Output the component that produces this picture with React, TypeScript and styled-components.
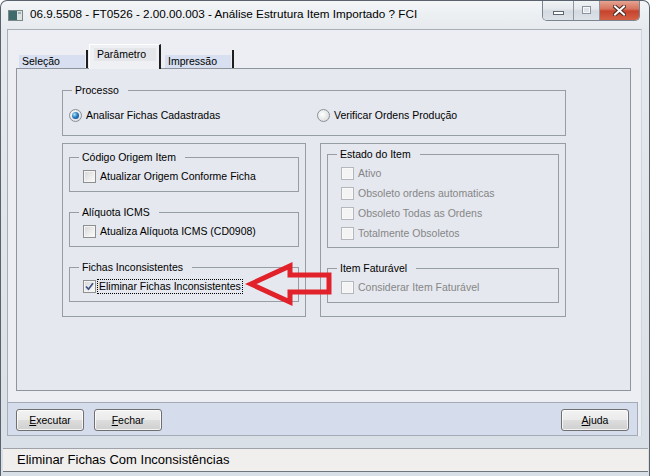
import React from 'react';
import styled, { createGlobalStyle, css } from 'styled-components';

const GlobalStyle = createGlobalStyle`
  html, body { margin: 0; padding: 0; background: #ffffff; }
  body { font-family: 'Liberation Sans', Arial, sans-serif; color: #000; }
`;

const Window = styled.div`
  width: 650px;
  height: 476px;
  box-sizing: border-box;
  display: flex;
  flex-direction: column;
  background: linear-gradient(180deg, #f3f5f7 0, #e6eaee 28px, #d9dfe6 100%);
  border: 1px solid #59626d;
  border-bottom: none;
  border-radius: 7px 7px 0 0;
  overflow: hidden;
`;

const TitleBar = styled.div`
  height: 28px;
  flex: none;
  display: flex;
  align-items: flex-start;
`;

const TitleIcon = styled.svg`
  margin: 9px 0 0 7px;
  flex: none;
`;

const TitleText = styled.div`
  margin: 5px 0 0 7px;
  font-size: 11.7px;
  line-height: 16px;
  white-space: nowrap;
`;

const Controls = styled.div`
  margin-left: auto;
  margin-right: 9px;
  margin-top: -1px;
  display: flex;
  height: 20px;
  border: 1px solid #7b848f;
  border-top: none;
  border-radius: 0 0 5px 5px;
  overflow: hidden;
`;

const ControlButton = styled.div<{ $kind: 'min' | 'max' | 'close' }>`
  height: 100%;
  display: flex;
  align-items: center;
  justify-content: center;
  box-sizing: border-box;
  ${(p) =>
    p.$kind === 'close'
      ? css`
          width: 39px;
          background: linear-gradient(180deg, #e8a998 0%, #d7735d 45%, #c7432c 55%, #d36146 100%);
        `
      : css`
          width: ${p.$kind === 'min' ? 31 : 26}px;
          border-right: 1px solid #8d96a0;
          background: linear-gradient(180deg, #f3f5f7 0%, #e4e8ec 45%, #d4dae1 55%, #dde2e8 100%);
        `}
`;

const MinGlyph = styled.span`
  width: 9px;
  height: 2px;
  margin-top: 6px;
  background: #fff;
  border: 1px solid #5d6672;
`;

const MaxGlyph = styled.span`
  width: 7px;
  height: 6px;
  border: 1px solid #8a939d;
  box-shadow: inset 0 0 0 1px #f6f7f8;
  background: #dfe3e8;
`;

const Client = styled.div`
  flex: none;
  margin: 0 7px 12px 6px;
  background: #eceef3;
  border-top: 1px solid #a8aeb6;
  border-left: 1px solid #a8aeb6;
  border-right: 1px solid #cfd5dc;
  display: flex;
  flex-direction: column;
`;

const TabArea = styled.div`
  padding: 14px 0 0 8px;
`;

const TabStrip = styled.div`
  height: 24px;
  display: flex;
  align-items: flex-end;
  gap: 1px;
`;

const Tab = styled.div<{ $active?: boolean }>`
  box-sizing: border-box;
  font-size: 10.5px;
  line-height: 13px;
  width: 72px;
  border-right: 2px solid #1e1e1e;
  ${(p) =>
    p.$active
      ? css`
          height: 25px;
          margin-bottom: -1px;
          position: relative;
          z-index: 1;
          padding: 3px 3px 0 4px;
          background: #eef0f4;
          border-top: 1px solid #ffffff;
          border-left: 1px solid #ffffff;
        `
      : css`
          height: 18px;
          padding: 5px 1px 0 3px;
        `}
`;

const TabLabel = styled.span<{ $active?: boolean }>`
  display: block;
  height: 13px;
  padding: 0 3px;
  background: ${(p) => (p.$active ? '#e4e6ea' : '#d7dff0')};
`;

const Panel = styled.div`
  position: relative;
  box-sizing: border-box;
  width: 615px;
  height: 323px;
  border: 1px solid #8f959d;
  background: #e5e8ef;
  padding: 15px 0 0 45px;
`;

const Group = styled.fieldset`
  margin: 0;
  padding: 6px 8px 8px 0;
  border: 1px solid #979da5;
  min-width: 0;
  font-size: 10.5px;
`;

const Legend = styled.legend`
  margin-left: 9px;
  padding: 0 9px 0 3px;
  font-size: 10.5px;
  line-height: 13px;
`;

const ProcessGroup = styled(Group)`
  width: 504px;
  box-sizing: border-box;
  padding: 12px 0 13px 0;
  display: grid;
  grid-template-columns: 248px 1fr;
`;

const LowerRow = styled.div`
  margin-top: 7px;
  display: grid;
  grid-template-columns: 244px 246px;
  gap: 14px;
`;

const OuterBox = styled.div<{ $top: number }>`
  box-sizing: border-box;
  height: 174px;
  border: 1px solid #979da5;
  padding: ${(p) => p.$top}px 6px 0 6px;
  display: flex;
  flex-direction: column;
  gap: 14px;
`;

const ListGroup = styled(Group)`
  padding: 2px 8px 4px 0;
`;

const Row = styled.label<{ $disabled?: boolean; $tall?: boolean; $indent?: number }>`
  display: flex;
  align-items: center;
  gap: 4px;
  height: ${(p) => (p.$tall ? 20 : 13)}px;
  padding-left: ${(p) => p.$indent ?? 13}px;
  font-size: 10.5px;
  line-height: 13px;
  white-space: nowrap;
  color: ${(p) => (p.$disabled ? '#868686' : '#000')};
`;

const Radio = styled.span<{ $checked?: boolean }>`
  flex: none;
  position: relative;
  width: 13px;
  height: 13px;
  box-sizing: border-box;
  border-radius: 50%;
  border: 1px solid #8b9097;
  background: radial-gradient(circle at 40% 40%, #ffffff 0, #e4e5e6 60%, #cfd1d3 100%);
  ${(p) =>
    p.$checked &&
    css`
      &::after {
        content: '';
        position: absolute;
        left: 2px;
        top: 2px;
        width: 7px;
        height: 7px;
        border-radius: 50%;
        background: radial-gradient(circle at 35% 35%, #b4e2fa 0, #2c7fc4 45%, #0d3f79 95%);
      }
    `}
`;

const Box = styled.span<{ $disabled?: boolean }>`
  flex: none;
  width: 13px;
  height: 13px;
  box-sizing: border-box;
  display: flex;
  align-items: center;
  justify-content: center;
  border: 1px solid ${(p) => (p.$disabled ? '#b4b7bb' : '#8e8f8f')};
  background: ${(p) =>
    p.$disabled ? '#f4f4f4' : 'linear-gradient(135deg, #d6d6d6 0%, #f2f2f2 70%, #fbfbfb 100%)'};
  box-shadow: inset 0 0 0 1px ${(p) => (p.$disabled ? '#f8f8f8' : '#f4f4f4')};
`;

const Focus = styled.span`
  outline: 1px dotted #000;
  outline-offset: 0;
  padding: 0 1px;
  margin-left: -2px;
`;

const Arrow = styled.svg`
  position: absolute;
  left: 227px;
  top: 192px;
  overflow: visible;
`;

const ButtonBar = styled.div`
  box-sizing: border-box;
  height: 34px;
  margin: 11px 3px 0 0;
  padding: 0 8px 0 8px;
  background: #d5ddec;
  border: 1px solid #a3abb7;
  border-left: none;
  display: flex;
  align-items: center;
  gap: 10px;
`;

const Button = styled.button<{ $push?: boolean }>`
  width: 68px;
  height: 22px;
  margin-top: 1px;
  ${(p) => p.$push && 'margin-left: auto;'}
  padding: 0;
  font-family: 'Liberation Sans', Arial, sans-serif;
  font-size: 10.5px;
  color: #000;
  border: 1px solid #707070;
  border-radius: 3px;
  background: linear-gradient(180deg, #f2f2f2 0%, #ebebeb 48%, #dddddd 52%, #cfcfcf 100%);
  box-shadow: inset 0 0 0 1px rgba(255, 255, 255, 0.75);
`;

const StatusBar = styled.div`
  flex: none;
  height: 24px;
  box-sizing: border-box;
  margin: 0 1px 0 2px;
  padding-left: 14px;
  background: #f0efee;
  border-top: 1px solid #9ea3a9;
  border-bottom: 1px solid #6f757c;
  font-size: 13px;
  line-height: 22px;
  white-space: nowrap;
`;

const Check = ({ checked, disabled }: { checked?: boolean; disabled?: boolean }) => (
  <Box $disabled={disabled}>
    {checked && (
      <svg width="9" height="9" viewBox="0 0 9 9">
        <path d="M1 4.5 L3.5 7.2 L8 1.2" fill="none" stroke="#3f5384" strokeWidth="1.7" />
      </svg>
    )}
  </Box>
);

const estados = ['Ativo', 'Obsoleto ordens automaticas', 'Obsoleto Todas as Ordens', 'Totalmente Obsoletos'];

export default function App() {
  return (
    <>
      <GlobalStyle />
      <Window>
        <TitleBar>
          <TitleIcon width="15" height="11" viewBox="0 0 15 11">
            <rect x="0.5" y="0.5" width="14" height="10" fill="#dde3e3" stroke="#7b8787" />
            <rect x="1" y="1" width="8" height="9" fill="#3e6c6d" />
            <rect x="10" y="2" width="3" height="2" fill="#9fb0b0" />
          </TitleIcon>
          <TitleText>06.9.5508 - FT0526 - 2.00.00.003 - Análise Estrutura Item Importado ? FCI</TitleText>
          <Controls>
            <ControlButton $kind="min">
              <MinGlyph />
            </ControlButton>
            <ControlButton $kind="max">
              <MaxGlyph />
            </ControlButton>
            <ControlButton $kind="close">
              <svg width="13" height="11" viewBox="0 0 13 11">
                <path d="M2 1.5 L11 9.5 M11 1.5 L2 9.5" stroke="#4a2a24" strokeWidth="4" strokeLinecap="square" />
                <path d="M2 1.5 L11 9.5 M11 1.5 L2 9.5" stroke="#ffffff" strokeWidth="2" strokeLinecap="square" />
              </svg>
            </ControlButton>
          </Controls>
        </TitleBar>

        <Client>
          <TabArea>
            <TabStrip>
              <Tab>
                <TabLabel>Seleção</TabLabel>
              </Tab>
              <Tab $active>
                <TabLabel $active>Parâmetro</TabLabel>
              </Tab>
              <Tab>
                <TabLabel>Impressão</TabLabel>
              </Tab>
            </TabStrip>
            <Panel>
              <ProcessGroup>
                <Legend>Processo</Legend>
                <Row $indent={6}>
                  <Radio $checked />
                  Analisar Fichas Cadastradas
                </Row>
                <Row $indent={6}>
                  <Radio />
                  Verificar Ordens Produção
                </Row>
              </ProcessGroup>

              <LowerRow>
                <OuterBox $top={7}>
                  <Group>
                    <Legend>Código Origem Item</Legend>
                    <Row>
                      <Check />
                      Atualizar Origem Conforme Ficha
                    </Row>
                  </Group>
                  <Group>
                    <Legend>Alíquota ICMS</Legend>
                    <Row>
                      <Check />
                      Atualiza Alíquota ICMS (CD0908)
                    </Row>
                  </Group>
                  <Group>
                    <Legend>Fichas Inconsistentes</Legend>
                    <Row>
                      <Check checked />
                      <Focus>Eliminar Fichas Inconsistentes</Focus>
                    </Row>
                  </Group>
                </OuterBox>

                <OuterBox $top={4}>
                  <ListGroup>
                    <Legend>Estado do Item</Legend>
                    {estados.map((e) => (
                      <Row key={e} $disabled $tall>
                        <Check disabled />
                        {e}
                      </Row>
                    ))}
                  </ListGroup>
                  <Group>
                    <Legend>Item Faturável</Legend>
                    <Row $disabled>
                      <Check disabled />
                      Considerar Item Faturável
                    </Row>
                  </Group>
                </OuterBox>
              </LowerRow>

              <Arrow width="90" height="46" viewBox="0 0 90 46">
                <polygon
                  points="7,23 46,5 46,14 85,14 85,31 46,31 46,41"
                  fill="none"
                  stroke="#e1222b"
                  strokeWidth="5"
                  strokeLinejoin="miter"
                />
              </Arrow>
            </Panel>
          </TabArea>

          <ButtonBar>
            <Button>
              <u>E</u>xecutar
            </Button>
            <Button>
              <u>F</u>echar
            </Button>
            <Button $push>
              <u>A</u>juda
            </Button>
          </ButtonBar>
        </Client>

        <StatusBar>Eliminar Fichas Com Inconsistências</StatusBar>
      </Window>
    </>
  );
}
